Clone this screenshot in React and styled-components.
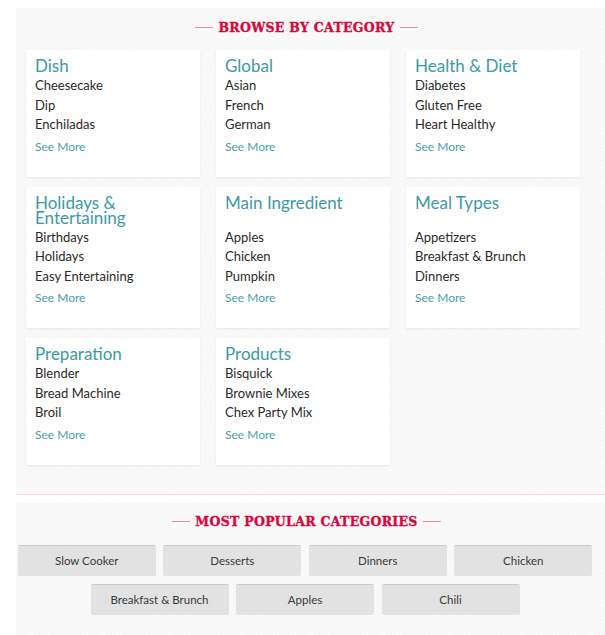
import React from 'react';
import styled, { createGlobalStyle } from 'styled-components';

const GlobalStyle = createGlobalStyle`
  html, body {
    margin: 0;
    padding: 0;
    background: #ffffff;
  }
  body {
    font-family: Lato, "Open Sans", sans-serif;
    padding-top: 8px;
  }
`;

const texture = `
  background-color: #f8f8f8;
  background-image: repeating-linear-gradient(
    -45deg,
    #fbfbfb 0px,
    #fbfbfb 1px,
    #f7f7f7 1px,
    #f7f7f7 3px
  );
`;

const Panel = styled.section`
  ${texture}
  margin-left: 16px;
  padding: ${p => p.$top}px 0 ${p => p.$bottom}px;
`;

const Inner = styled.div`
  width: 581px;
`;

const Heading = styled.h2`
  display: flex;
  align-items: center;
  justify-content: center;
  gap: 5px;
  margin: 0 0 ${p => p.$gap}px;
  height: 20px;
  font-family: "DejaVu Serif", serif;
  font-weight: 700;
  font-size: 12.5px;
  letter-spacing: 0.3px;
  -webkit-text-stroke: 0.35px #d6083b;
  color: #d6083b;
  text-transform: uppercase;

  &::before, &::after {
    content: '';
    width: 18px;
    height: 1px;
    background: #ef8a9b;
  }
`;

const Grid = styled.div`
  display: grid;
  grid-template-columns: repeat(3, 174px);
  column-gap: 16px;
  row-gap: 10px;
  padding-left: 10px;
`;

const Card = styled.div`
  background: #ffffff;
  box-shadow: 0 1px 2px rgba(0, 0, 0, 0.07);
  padding: 8px 9px 22px;
`;

const Title = styled.h3`
  margin: 0 0 3px;
  font-weight: 400;
  font-size: 17px;
  line-height: 15px;
  min-height: ${p => p.$lines * 15}px;
  color: #3b9aa5;
`;

const List = styled.ul`
  list-style: none;
  margin: 0;
  padding: 0;
`;

const Item = styled.li`
  font-size: 13px;
  line-height: 19.5px;
  color: #2a2a2a;
`;

const SeeMore = styled.a`
  display: block;
  margin-top: 4px;
  font-size: 12px;
  line-height: 16px;
  color: #4a9ea8;
  text-decoration: none;
`;

const Divider = styled.hr`
  border: 0;
  height: 1px;
  margin: 0 0 8px 16px;
  background: #fcd3de;
`;

const ButtonRow = styled.div`
  display: flex;
  flex-wrap: wrap;
  justify-content: center;
  gap: 8px 7.5px;
  width: 576px;
  margin-left: 1px;
`;

const PopButton = styled.a`
  box-sizing: border-box;
  width: 138px;
  height: 31px;
  display: flex;
  align-items: center;
  justify-content: center;
  background: #e2e2e2;
  border-top: 1px solid #c9c9c9;
  border-radius: 2px;
  font-size: 11.5px;
  color: #3a3a3a;
  text-decoration: none;
`;

const categories = [
  { title: 'Dish', items: ['Cheesecake', 'Dip', 'Enchiladas'], lines: 1 },
  { title: 'Global', items: ['Asian', 'French', 'German'], lines: 1 },
  { title: 'Health & Diet', items: ['Diabetes', 'Gluten Free', 'Heart Healthy'], lines: 1 },
  { title: 'Holidays & Entertaining', items: ['Birthdays', 'Holidays', 'Easy Entertaining'], lines: 2 },
  { title: 'Main Ingredient', items: ['Apples', 'Chicken', 'Pumpkin'], lines: 2 },
  { title: 'Meal Types', items: ['Appetizers', 'Breakfast & Brunch', 'Dinners'], lines: 2 },
  { title: 'Preparation', items: ['Blender', 'Bread Machine', 'Broil'], lines: 1 },
  { title: 'Products', items: ['Bisquick', 'Brownie Mixes', 'Chex Party Mix'], lines: 1 },
];

const popular = ['Slow Cooker', 'Desserts', 'Dinners', 'Chicken', 'Breakfast & Brunch', 'Apples', 'Chili'];

export default function App() {
  return (
    <>
      <GlobalStyle />
      <Panel $top={9} $bottom={29}>
        <Inner>
          <Heading $gap={13}>Browse by Category</Heading>
          <Grid>
            {categories.map(c => (
              <Card key={c.title}>
                <Title $lines={c.lines}>{c.title}</Title>
                <List>
                  {c.items.map(i => <Item key={i}>{i}</Item>)}
                </List>
                <SeeMore href="#">See More</SeeMore>
              </Card>
            ))}
          </Grid>
        </Inner>
      </Panel>
      <Divider />
      <Panel $top={9} $bottom={20}>
        <Inner>
          <Heading $gap={13}>Most Popular Categories</Heading>
          <ButtonRow>
            {popular.map(p => <PopButton key={p} href="#">{p}</PopButton>)}
          </ButtonRow>
        </Inner>
      </Panel>
    </>
  );
}
